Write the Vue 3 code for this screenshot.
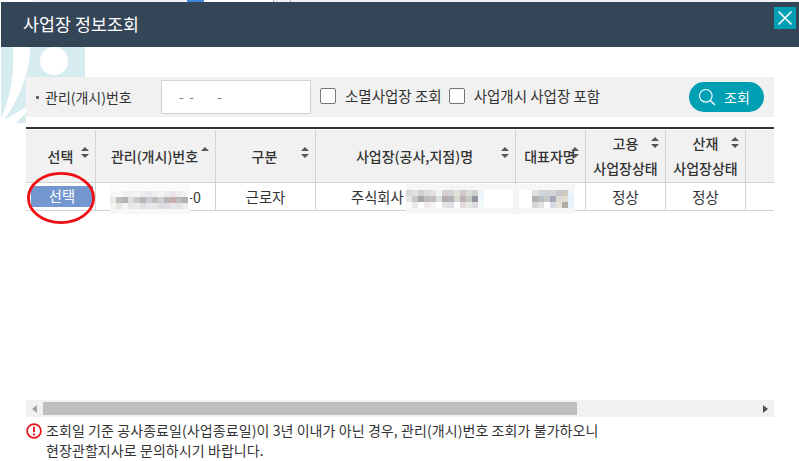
<script setup>
const columns = [
  { label: ['선택'], width: 70, sort: 'both', cls: 'c-select' },
  { label: ['관리(개시)번호'], width: 120, sort: 'up', cls: 'c-no' },
  { label: ['구분'], width: 100, sort: 'both', cls: 'c-type' },
  { label: ['사업장(공사,지점)명'], width: 200, sort: 'both', cls: 'c-name' },
  { label: ['대표자명'], width: 70, sort: 'both', cls: 'c-rep' },
  { label: ['고용', '사업장상태'], width: 80, sort: 'both', cls: 'c-two' },
  { label: ['산재', '사업장상태'], width: 80, sort: 'both', cls: 'c-two' },
  { label: [], width: 28, sort: '', cls: 'c-last' }
]
const gridCols = columns.map(c => c.width + 'px').join(' ')
const blur1 = [
  '#f6f6f6','#f8f8f8','#f2f2f2','#f0f0f2','#f4f4f4','#eeeef0','#e8e8ec','#f0f0f0','#f4f4f4','#ececec','#e8e6e8','#eeeeee','#f4f4f4',
  '#e8e8e8','#c0c0c0','#b4b4b4','#dcdcdc','#c8c8c8','#b4b6b8','#cfcdd2','#bcbcbc','#d0d0d0','#b8b6ba','#c8aeae','#bcbcbc','#b0b0b0',
  '#f4f2ee','#e6e4e0','#f4f4f4','#e6e6e6','#ecebe8','#e0dee2','#e8e6ea','#e6e6e6','#dcdce0','#dfdde0','#e6e6ea','#e2e2e2','#ededed'
]
const blur2 = [
  '#d8d8d8','#e0e0e0','#d4d0d2','#dcdcdc','#e4e0e0','#f0f4f6','#d4d0d0','#d4d2d2','#e2e0d8','#d0cad0','#d8dcd8','#cfcfcf','#eef6fa',
  '#e4e4e4','#c8c8c8','#a8a6a8','#bcbcbc','#c0c0be','#dce0e0','#b2acac','#b0b2b8','#d8d8d0','#c0b0b2','#c8cac4','#94949e','#f0f8fc',
  '#fafafa','#e8e8ec','#ffffff','#f0ecec','#f6f2f2','#ffffff','#e4e2e2','#dfe0e6','#ffffff','#e4dcdc','#e8e8e4','#dcdcdc','#f4fafc'
]
const blur3 = [
  '#e4e2e0','#cfd6d8','#cfd6d8','#d6d4d6','#c6c6d2','#d0c8bc','#eaf2fa',
  '#b6b0ac','#b4bec4','#c8c8c8','#a8a8bc','#dcd8d4','#e2dcd2','#e6f0fa',
  '#d8d6d4','#dfe0e2','#ffffff','#d8d8e0','#e6e2dc','#b0aca4','#eaf2fa'
]
</script>

<template>
  <div class="page">
    <div class="behind">
      <span class="tab-a"></span><span class="tab-blue"></span><span class="tab-b"></span><span class="tab-c"></span>
    </div>
    <div class="modal">
      <header class="head">
        <h1 class="title">사업장 정보조회</h1>
        <button class="close" aria-label="닫기">
          <svg width="16" height="16" viewBox="0 0 16 16"><path d="M1.5 1.5 14.5 14.5M14.5 1.5 1.5 14.5" stroke="#fff" stroke-width="1.6" fill="none"/></svg>
        </button>
      </header>

      <div class="content">
        <svg class="mark" width="85" height="78" viewBox="0 0 85 78">
          <path d="M0 0H12C14 24 9 52 0 72Z" fill="#d6ecef"/>
          <path d="M29 0H84V32H25V60L3 73C16 55 30 25 29 0Z" fill="#d6ecef"/>
          <path d="M15 76 25 66V76Z" fill="#d6ecef"/>
          <circle cx="53" cy="14" r="14" fill="#fff"/>
        </svg>

        <div class="search">
          <span class="bullet"></span>
          <span class="search-label">관리(개시)번호</span>
          <div class="input">- &nbsp;- &nbsp;&nbsp;&nbsp;&nbsp;&nbsp;&nbsp;&nbsp;-</div>
          <span class="check"></span><span class="check-label">소멸사업장 조회</span>
          <span class="check second"></span><span class="check-label">사업개시 사업장 포함</span>
          <button class="find">
            <svg width="18" height="18" viewBox="0 0 18 18"><circle cx="7.8" cy="7.8" r="6.3" stroke="#fff" stroke-width="1.2" fill="none"/><path d="M12.4 12.4 17 17" stroke="#fff" stroke-width="1.4"/></svg>
            <span>조회</span>
          </button>
        </div>

        <div class="table">
          <div class="row head-row" :style="{ gridTemplateColumns: gridCols }">
            <div v-for="(c, i) in columns" :key="i" class="th" :class="c.cls">
              <span class="th-text"><span v-for="l in c.label" :key="l" class="th-line">{{ l }}</span></span>
              <svg v-if="c.sort" class="sort" width="8" height="11" viewBox="0 0 8 11">
                <path d="M4 0 8 4H0Z" fill="#555"/>
                <path v-if="c.sort === 'both'" d="M4 11 0 7H8Z" fill="#555"/>
              </svg>
            </div>
          </div>
          <div class="row body-row" :style="{ gridTemplateColumns: gridCols }">
            <div class="td td-select"><span class="pick">선택</span></div>
            <div class="td td-no"><span class="dash">-0</span></div>
            <div class="td">근로자</div>
            <div class="td td-name"><span>주식회사</span></div>
            <div class="td td-rep"></div>
            <div class="td">정상</div>
            <div class="td">정상</div>
            <div class="td"></div>
          </div>
          <div class="patch p1"><span class="mosaic m1"><i v-for="(b, i) in blur1" :key="i" :style="{ background: b }"></i></span></div>
          <div class="patch p2">
            <span class="strip"></span>
            <span class="mosaic m2"><i v-for="(b, i) in blur2" :key="i" :style="{ background: b }"></i></span>
            <span class="mosaic m3"><i v-for="(b, i) in blur3" :key="i" :style="{ background: b }"></i></span>
          </div>
          <svg class="ring" width="72" height="54" viewBox="0 0 72 54">
            <ellipse cx="36" cy="27" rx="32.6" ry="24.6" fill="none" stroke="#ee0f14" stroke-width="2.8"/>
          </svg>
        </div>

        <div class="spacer"></div>

        <div class="scrollbar">
          <svg width="5" height="8" viewBox="0 0 5 8" class="arrow"><path d="M5 0V8L0 4Z" fill="#a3a3a3"/></svg>
          <div class="track"><div class="thumb"></div></div>
          <svg width="5" height="8" viewBox="0 0 5 8" class="arrow"><path d="M0 0V8L5 4Z" fill="#505050"/></svg>
        </div>

        <div class="notice">
          <svg class="warn" width="16" height="16" viewBox="0 0 16 16">
            <circle cx="8" cy="8" r="6.9" fill="#fff" stroke="#e8141c" stroke-width="1.7"/>
            <path d="M8 3.8V9.2" stroke="#e8141c" stroke-width="1.9"/>
            <circle cx="8" cy="11.6" r="1.15" fill="#e8141c"/>
          </svg>
          <p class="notice-text">조회일 기준 공사종료일(사업종료일)이 3년 이내가 아닌 경우, 관리(개시)번호 조회가 불가하오니<br>현장관할지사로 문의하시기 바랍니다.</p>
        </div>
      </div>
    </div>
  </div>
</template>

<style scoped>
.page {
  width: 799px;
  height: 461px;
  overflow: hidden;
  background: #fff;
  font-family: "Noto Sans CJK KR", "Noto Sans", sans-serif;
  color: #333;
  display: flex;
  flex-direction: column;
}
.behind {
  height: 2px;
  display: flex;
  background: #f2f2f2;
  flex: none;
}
.tab-a { width: 33px; background: #fff; }
.tab-blue { width: 17px; margin-left: 154px; background: #3f87dc; }
.tab-b { width: 69px; background: #fff; }
.tab-c { width: 16px; background: #f2f2f2; border-left: 1px solid #aaa; border-right: 1px solid #aaa; }
.modal {
  flex: 1;
  margin-left: 1px;
  display: flex;
  flex-direction: column;
  min-height: 0;
}
.head {
  height: 45px;
  flex: none;
  background: #344557;
  display: flex;
  align-items: center;
  justify-content: space-between;
  padding: 0 3px 0 22px;
}
.title {
  margin: 0;
  font-size: 17.3px;
  font-weight: 400;
  color: #fff;
  letter-spacing: 0.1px;
  position: relative;
  top: -1px;
}
.close {
  width: 22px;
  height: 22px;
  padding: 0;
  border: 0;
  background: #00a0b4;
  display: flex;
  align-items: center;
  justify-content: center;
  align-self: flex-start;
  margin-top: 5px;
}
.content {
  flex: 1;
  position: relative;
  padding: 30px 25px 0;
  display: flex;
  flex-direction: column;
  min-height: 0;
}
.mark { position: absolute; left: 0; top: 0; }
.search {
  position: relative;
  height: 40px;
  flex: none;
  background: #f1f1f1;
  display: flex;
  align-items: center;
  font-size: 14.5px;
}
.bullet { width: 3px; height: 3px; margin-left: 10px; background: #666; }
.search-label { margin-left: 6px; width: 116px; font-size: 14px; }
.input {
  width: 150px;
  height: 34px;
  box-sizing: border-box;
  background: #fff;
  border: 1px solid #d2d2d2;
  font-size: 13px;
  color: #777;
  line-height: 32px;
  padding-left: 17px;
}
.check {
  width: 16px;
  height: 16px;
  box-sizing: border-box;
  border: 1px solid #767676;
  border-radius: 2px;
  background: #fff;
  margin-left: 9px;
  position: relative;
  top: -1px;
}
.check.second { margin-left: 7px; }
.check-label { margin-left: 9px; position: relative; top: -2px; }
.find {
  margin-left: auto;
  margin-right: 10px;
  width: 75px;
  height: 30px;
  border: 0;
  border-radius: 15px;
  background: #00a0b4;
  color: #fff;
  font-family: inherit;
  font-size: 14px;
  display: flex;
  align-items: center;
  justify-content: center;
  gap: 8px;
  padding: 0 5px 0 0;
}
.table {
  position: relative;
  flex: none;
  margin-top: 10px;
  border-top: 2px solid #333;
}
.row { display: grid; }
.head-row { background: #f1f1f1; height: 53px; margin-top: 1px; border-bottom: 1px solid #d2d2d2; box-sizing: border-box; }
.body-row { height: 28px; border-bottom: 1px solid #d2d2d2; box-sizing: border-box; }
.th {
  position: relative;
  display: flex;
  align-items: center;
  justify-content: center;
  font-size: 14px;
  font-weight: 500;
  color: #333;
  border-right: 1px solid #d2d2d2;
}
.th-text { display: flex; flex-direction: column; align-items: center; line-height: 25px; }
.c-no .th-text { margin-left: -2px; }
.c-type .th-text { margin-left: -2px; }
.c-name .th-text { margin-left: -2px; }
.c-rep .th-text { margin-left: -1px; }
.c-last { border-right: 0; }
.sort { position: absolute; right: 6px; top: 17px; }
.c-two .sort { top: 7px; }
.th-line { white-space: nowrap; }
.td {
  display: flex;
  align-items: center;
  justify-content: center;
  font-size: 14.3px;
  color: #333;
  border-right: 1px solid #d2d2d2;
  white-space: nowrap;
  position: relative;
}
.td:last-child { border-right: 0; }
.pick {
  width: 62px;
  height: 21px;
  margin-left: 3px;
  background: #7597cf;
  color: #fff;
  line-height: 20px;
  text-align: center;
  font-size: 14.3px;
}
.td-no { justify-content: flex-end; padding-right: 14px; }
.td-name { justify-content: flex-start; padding-left: 35px; }
.patch {
  position: absolute;
  top: 55px;
  height: 30px;
}
.p1 { left: 84px; width: 80px; background: linear-gradient(#fbfbfb 0 6px, #fdfdfd 6px 24px, #f7f7f7 24px); }
.p2 { left: 380px; width: 169px; background: linear-gradient(#f6f6f6 0 6px, #ffffff 6px 24px, #f6f6f6 24px); }
.strip { position: absolute; left: 107px; top: 0; width: 6px; height: 30px; background: #f5f5f5; }
.mosaic { display: grid; position: absolute; filter: blur(0.5px); }
.mosaic i { display: block; height: 6px; }
.m1 { left: 0; top: 7px; grid-template-columns: repeat(13, 6px); }
.m2 { left: 0; top: 6px; grid-template-columns: repeat(13, 6px); }
.m3 { left: 126px; top: 6px; grid-template-columns: repeat(7, 6px); }
.ring { position: absolute; left: -1px; top: 42px; }
.spacer { flex: 1; }
.scrollbar {
  flex: none;
  height: 17px;
  background: #f1f1f1;
  display: flex;
  align-items: center;
  position: absolute;
  left: 25px;
  right: 25px;
  top: 353px;
}
.arrow { flex: none; margin: 0 6px; }
.track { flex: 1; height: 13px; }
.thumb { width: 534px; height: 13px; background: #bebebe; }
.notice {
  flex: none;
  display: flex;
  height: 41px;
  align-items: flex-start;
}
.warn { flex: none; margin-top: 3px; }
.notice-text {
  margin: 0 0 0 4px;
  font-size: 14px;
  letter-spacing: 0.08px;
  line-height: 20px;
  color: #333;
  white-space: nowrap;
}
</style>

<style>
html, body { margin: 0; background: #fff; }
</style>
